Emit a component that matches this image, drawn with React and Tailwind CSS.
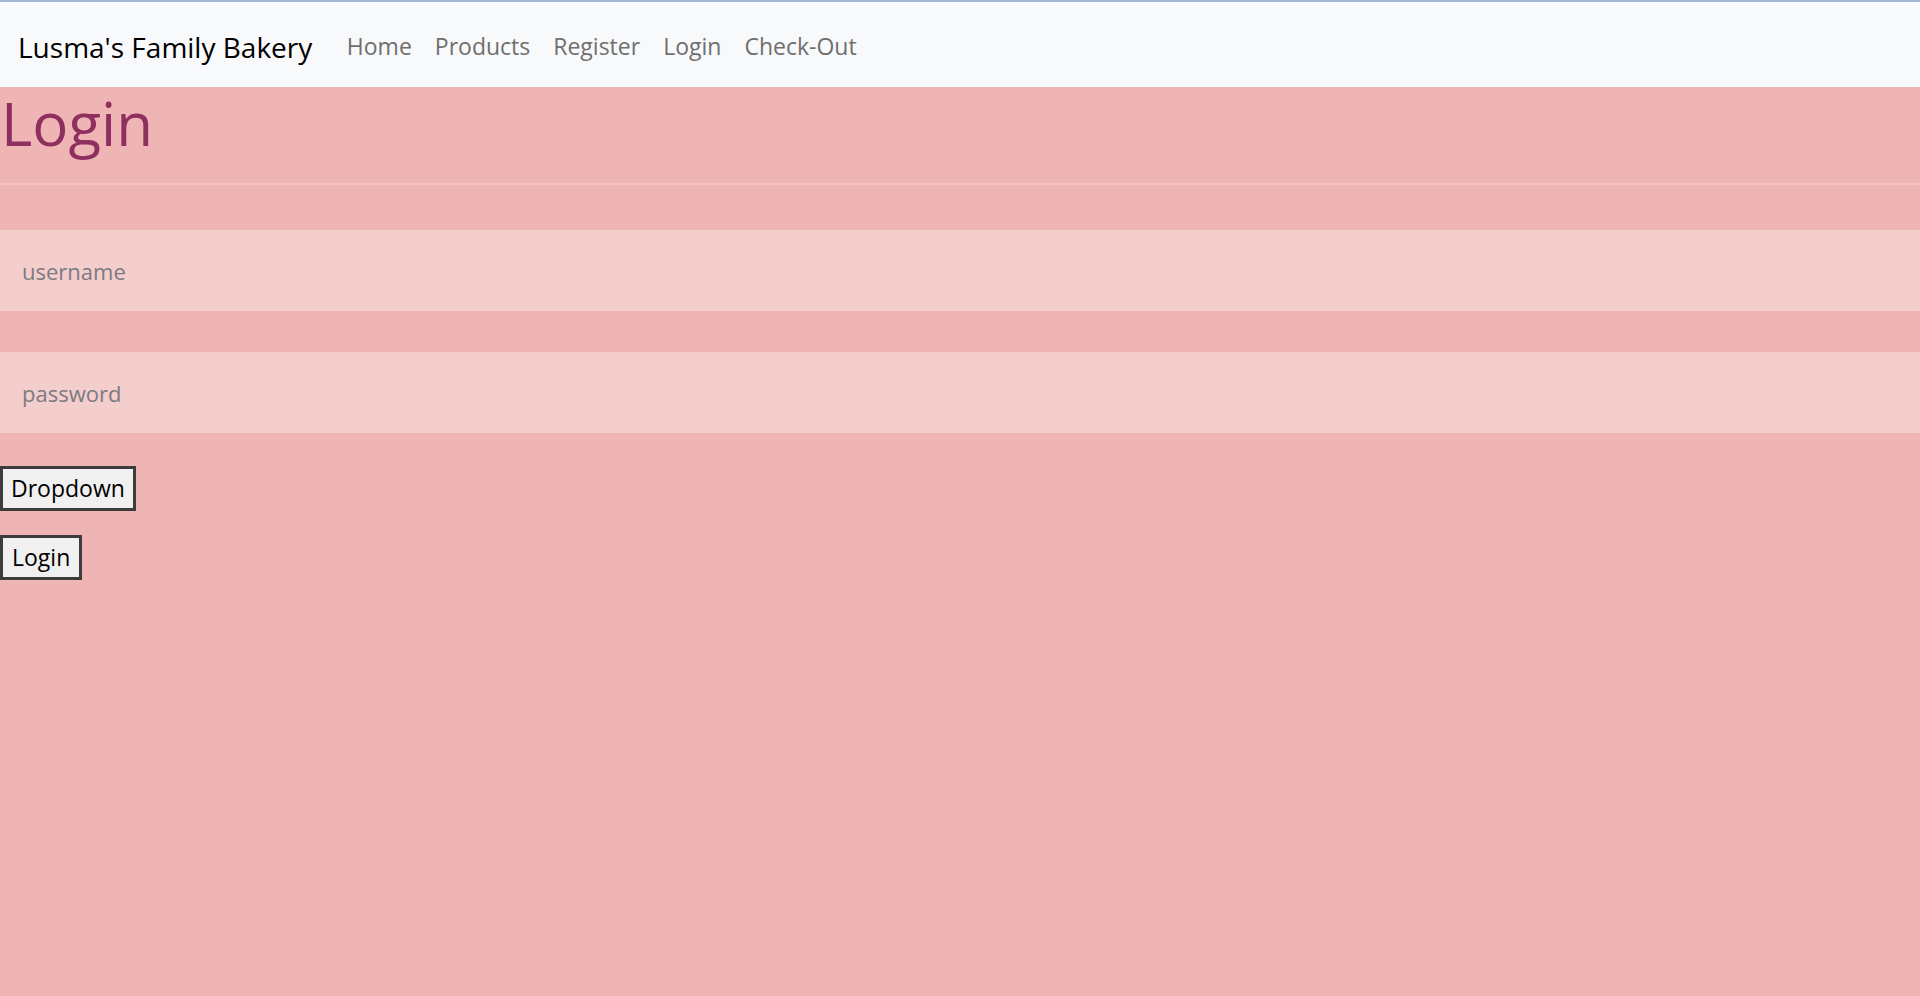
import React, { useState } from 'react';

const links = ['Home', 'Products', 'Register', 'Login', 'Check-Out'];

const App = () => {
  const [username, setUsername] = useState('');
  const [password, setPassword] = useState('');
  const [open, setOpen] = useState(false);

  return (
    <div className="min-h-screen bg-[#efb5b5] font-['Open_Sans',sans-serif]">
      <nav className="h-[87px] bg-[#f8f9fa] border-t-2 border-[#a7b7d6] flex items-center pl-[18px] pt-[4px]">
        <a href="#" className="text-[28px] text-black mr-[23px]">Lusma's Family Bakery</a>
        <ul className="flex">
          {links.map((l) => (
            <li key={l}>
              <a href="#" className="block px-[11.5px] text-[23px] text-[#6f6f6f]">{l}</a>
            </li>
          ))}
        </ul>
      </nav>

      <h1 className="text-[60px] leading-[72px] text-[#8e2f5f] font-medium pl-[1px] mb-[24px]">Login</h1>
      <hr className="border-0 h-[2px] bg-[#f2c4c4]" />

      <div className="mt-[45px] flex flex-col gap-[41px]">
        <input
          value={username}
          onChange={(e) => setUsername(e.target.value)}
          placeholder="username"
          className="h-[81px] w-full bg-[#f4cdcd] px-[22px] text-[22px] text-[#212529] placeholder:text-[#7b7b7f] outline-none"
        />
        <input
          type="password"
          value={password}
          onChange={(e) => setPassword(e.target.value)}
          placeholder="password"
          className="h-[81px] w-full bg-[#f4cdcd] px-[22px] text-[22px] text-[#212529] placeholder:text-[#7b7b7f] outline-none"
        />
      </div>

      <div className="mt-[33px] flex flex-col items-start gap-[24px]">
        <button
          onClick={() => setOpen(!open)}
          className="h-[45px] px-[8px] border-[3px] border-[#3c3c3c] bg-[#f0f0f0] text-[23px] text-black"
        >
          Dropdown
        </button>
        <button className="h-[45px] px-[9px] border-[3px] border-[#3c3c3c] bg-[#f0f0f0] text-[23px] text-black">
          Login
        </button>
      </div>
    </div>
  );
};

export default App;
